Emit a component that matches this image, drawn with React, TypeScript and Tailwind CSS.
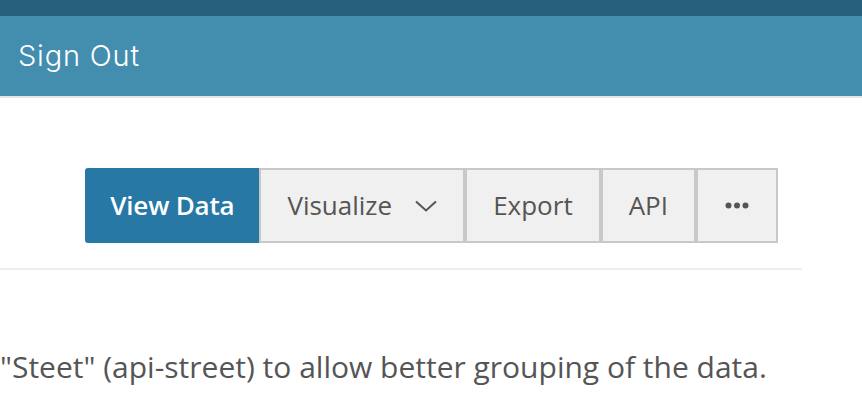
const buttons = [
  { label: 'Visualize', chevron: true },
  { label: 'Export' },
  { label: 'API' },
];

const App = () => (
  <div className="min-h-[416px] bg-white text-[#555] font-['Open_Sans',sans-serif]">
    <div className="h-4 bg-[#27607d]" />
    <header className="h-20 bg-[#438dae] border-b-2 border-[#e6e6e6] box-content flex items-center px-[18px]">
      <span className="text-[29px] font-light text-white font-['Inter',sans-serif] tracking-[0.8px]">Sign Out</span>
    </header>

    <div className="w-[802px]">
      <div className="flex justify-end pt-[70px] pr-6 pb-[25px] border-b-2 border-[#eee]">
        <div className="flex h-[75px] text-[26px]">
          <button className="px-[25px] bg-[#2878a5] text-white font-semibold rounded-l-[3px] tracking-[-0.2px]">
            View Data
          </button>
          {buttons.map((b) => (
            <button
              key={b.label}
              className="flex items-center gap-[23px] px-[26px] bg-[#f0f0f0] border-2 border-[#c8c8c8]"
            >
              {b.label}
              {b.chevron && (
                <svg width="22" height="12" viewBox="0 0 22 12" fill="none" stroke="#555" strokeWidth="2">
                  <path d="M1 1.5 L11 10.5 L21 1.5" />
                </svg>
              )}
            </button>
          ))}
          <button className="flex items-center px-[27px] bg-[#f0f0f0] border-2 border-[#c8c8c8]">
            <svg width="24" height="7" viewBox="0 0 24 7" className="fill-[#555]">
              <circle cx="3.5" cy="3.5" r="3" />
              <circle cx="12" cy="3.5" r="3" />
              <circle cx="20.5" cy="3.5" r="3" />
            </svg>
          </button>
        </div>
      </div>
    </div>

    <p className="mt-[76px] text-[30px] leading-[42px] whitespace-nowrap">
      "Steet" (api-street) to allow better grouping of the data.
    </p>
  </div>
);

export default App;
